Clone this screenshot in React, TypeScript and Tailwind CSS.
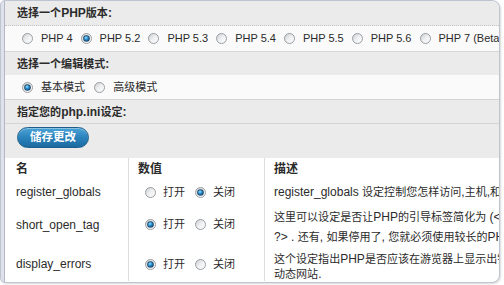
import React from 'react'

type Opt = { label: string; checked?: boolean }

const phpVersions: Opt[] = [
  { label: 'PHP 4' },
  { label: 'PHP 5.2', checked: true },
  { label: 'PHP 5.3' },
  { label: 'PHP 5.4' },
  { label: 'PHP 5.5' },
  { label: 'PHP 5.6' },
  { label: 'PHP 7 (Beta)' },
]

const modes: Opt[] = [{ label: '基本模式', checked: true }, { label: '高级模式' }]

// CJK runs are drawn a touch smaller than the latin text, like the original page
function T({ children }: { children: string }) {
  const parts = children.split(/([\u3000-\u9fff\uff00-\uffef]+)/)
  return (
    <>
      {parts.map((p, i) =>
        i % 2 === 1 ? (
          <span key={i} className="text-[0.92em]">
            {p}
          </span>
        ) : (
          p
        )
      )}
    </>
  )
}

function Radio({ checked }: { checked?: boolean }) {
  return (
    <svg width="11" height="11" viewBox="0 0 11 11" className="shrink-0">
      <circle cx="5.5" cy="5.5" r="5" fill="url(#radioBg)" stroke="#9a9ea3" strokeWidth="1" />
      {checked ? (
        <>
          <circle cx="5.5" cy="5.5" r="3.3" fill="#24455f" />
          <circle cx="5.5" cy="5.5" r="2.6" fill="url(#radioDot)" />
        </>
      ) : null}
    </svg>
  )
}

function RadioGroup({ options, gap }: { options: Opt[]; gap: string }) {
  return (
    <div className={`flex items-center ${gap}`}>
      {options.map((o) => (
        <label key={o.label} className="flex items-center gap-[8px] whitespace-nowrap">
          <Radio checked={o.checked} />
          <span>
            <T>{o.label}</T>
          </span>
        </label>
      ))}
    </div>
  )
}

function OnOff({ on }: { on: boolean }) {
  return (
    <div className="flex items-center gap-[10px] pl-[16px] text-[12px]">
      <span className="flex items-center gap-[7px]">
        <Radio checked={on} />
        <T>打开</T>
      </span>
      <span className="flex items-center gap-[7px]">
        <Radio checked={!on} />
        <T>关闭</T>
      </span>
    </div>
  )
}

const rows = [
  {
    name: 'register_globals',
    on: false,
    height: 'h-[20px]',
    lh: 'leading-[20px] pt-0',
    desc: ['register_globals 设定控制您怎样访问,主机,和服务器变量'],
  },
  {
    name: 'short_open_tag',
    on: true,
    height: 'h-[45px]',
    lh: 'leading-[20px] pt-[5px]',
    desc: ['这里可以设定是否让PHP的引导标签简化为 (<? 和', '?> . 还有, 如果停用了, 您就必须使用较长的PHP标签'],
  },
  {
    name: 'display_errors',
    on: true,
    height: 'h-[34px]',
    lh: 'leading-[15px] pt-[5px]',
    desc: ['这个设定指出PHP是否应该在游览器上显示出错误讯息,通常用于', '动态网站.'],
  },
]

export default function App() {
  return (
    <div
      className="h-[285px] w-[504px] overflow-hidden bg-white text-[12px] text-[#2b2b2b]"
      style={{ fontFamily: '"Liberation Sans", "Noto Sans CJK SC", sans-serif' }}
    >
      <svg width="0" height="0" className="absolute">
        <defs>
          <linearGradient id="radioBg" x1="0" y1="0" x2="1" y2="1">
            <stop offset="0" stopColor="#c9cbcd" />
            <stop offset="0.5" stopColor="#eef0f1" />
            <stop offset="1" stopColor="#ffffff" />
          </linearGradient>
          <radialGradient id="radioDot" cx="0.4" cy="0.35" r="0.7">
            <stop offset="0" stopColor="#9fe0ff" />
            <stop offset="0.5" stopColor="#2a8fd0" />
            <stop offset="1" stopColor="#0f4f86" />
          </radialGradient>
        </defs>
      </svg>
      <div className="h-[283px] w-[500px] overflow-hidden rounded-r-[8px] rounded-l-[5px] border border-[#bfc4d2] bg-[#dfe2ea] pl-[3px] shadow-[1px_1px_2px_rgba(0,0,0,0.15)]">
        <div className="h-full overflow-hidden rounded-r-[7px] border-l border-[#b3b8c6] bg-white">
          <div className="flex h-[25px] items-center border-b border-dotted border-[#c4c4c4] bg-[#ebebeb] pl-[12px] text-[12px] font-bold">
            <span>
              <T>选择一个PHP版本:</T>
            </span>
          </div>
          <div className="flex h-[25px] items-center bg-[#fafafa] pl-[17px] text-[11px]">
            <RadioGroup options={phpVersions} gap="gap-[8px]" />
          </div>
          <div className="flex h-[24px] items-center border-t border-[#d6d6d6] bg-[#ebebeb] pl-[12px] text-[12px] font-bold">
            <span>
              <T>选择一个编辑模式:</T>
            </span>
          </div>
          <div className="flex h-[24px] items-center bg-[#fafafa] pl-[17px] text-[12px]">
            <RadioGroup options={modes} gap="gap-[9px]" />
          </div>
          <div className="flex h-[25px] items-center border-y border-[#d4d4d4] border-b-dotted bg-[#ebebeb] pl-[12px] text-[12px] font-bold">
            <span>
              <T>指定您的php.ini设定:</T>
            </span>
          </div>
          <div className="h-[34px] bg-[#ebebeb] pl-[12px] pt-[3px]">
            <button className="h-[21px] w-[72px] rounded-full border border-[#1d5f8a] bg-gradient-to-b from-[#4aa3d6] via-[#2b83bd] to-[#1a6aa0] text-[12.5px] font-bold text-white shadow-[inset_0_1px_0_rgba(255,255,255,0.35)]">
              <T>储存更改</T>
            </button>
          </div>
          <div className="grid grid-cols-[123px_136px_1fr] bg-white">
            <div className="flex h-[24px] items-center pl-[11px] text-[13px] font-bold">
              <T>名</T>
            </div>
            <div className="flex h-[24px] items-center border-l border-[#dcdcdc] pl-[9px] text-[13px] font-bold">
              <T>数值</T>
            </div>
            <div className="flex h-[24px] items-center whitespace-nowrap border-l border-[#dcdcdc] pl-[9px] text-[13px] font-bold">
              <T>描述</T>
            </div>
            {rows.map((r) => (
              <React.Fragment key={r.name}>
                <div className={`flex items-center pl-[11px] ${r.height}`}>{r.name}</div>
                <div className={`flex items-center border-l border-[#dcdcdc] ${r.height}`}>
                  <OnOff on={r.on} />
                </div>
                <div className={`whitespace-nowrap border-l border-[#dcdcdc] pl-[9px] ${r.height} ${r.lh}`}>
                  {r.desc.map((d) => (
                    <div key={d}>
                      <T>{d}</T>
                    </div>
                  ))}
                </div>
              </React.Fragment>
            ))}
          </div>
        </div>
      </div>
    </div>
  )
}
